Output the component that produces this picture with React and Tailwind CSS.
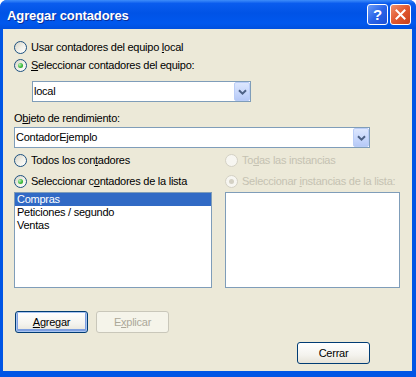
import React from 'react';

const FONT = "font-['Liberation_Sans',Arial,sans-serif]";

function Radio({ checked, disabled }) {
  return (
    <span
      className={`w-[13px] h-[13px] rounded-full border flex items-center justify-center shrink-0 ${
        disabled
          ? 'border-[#D4D1C4] bg-[#F7F6F1]'
          : 'border-[#1C5180] bg-[linear-gradient(135deg,#D6D3C6_0%,#F2F1EA_55%,#FFFFFF_100%)]'
      }`}
    >
      {checked && (
        <span
          className={`w-[5px] h-[5px] rounded-full ${
            disabled ? 'bg-[#D4D1C4]' : 'bg-[radial-gradient(circle_at_35%_35%,#B9F1B9_0%,#3DBA3D_55%,#1E931E_100%)]'
          }`}
        />
      )}
    </span>
  );
}

function RadioRow({ checked, disabled, children, className = '' }) {
  return (
    <div className={`h-[13px] flex items-center gap-[4px] ${className}`}>
      <Radio checked={checked} disabled={disabled} />
      <span className={`leading-[13px] whitespace-nowrap ${disabled ? 'text-[#C5C2B2]' : 'text-black'}`}>{children}</span>
    </div>
  );
}

function Combo({ value, className = '' }) {
  return (
    <div className={`h-[21px] border border-[#7F9DB9] bg-white flex items-stretch ${className}`}>
      <span className="flex-1 pl-[1px] flex items-center leading-[13px]">{value}</span>
      <span className="w-[16px] rounded-[2px] border border-[#BACDF7] bg-[linear-gradient(180deg,#DDE7FE_0%,#C6D6FB_60%,#B6C9F6_100%)] flex items-center justify-center">
        <svg width="9" height="6" viewBox="0 0 9 6">
          <path d="M1 1.2 L4.5 4.6 L8 1.2" fill="none" stroke="#4D6185" strokeWidth="2" />
        </svg>
      </span>
    </div>
  );
}

function Button({ children, primary, disabled, className = '' }) {
  let look = 'border-[#003C74] text-black bg-[linear-gradient(180deg,#FFFFFF_0%,#F4F3EE_60%,#E6E3D8_100%)]';
  if (primary) look += ' shadow-[inset_0_0_0_1px_#A9C4F0,inset_0_-1px_0_2px_#7E9FE0]';
  if (disabled) look = 'border-[#C9C7BA] text-[#ACA899] bg-[#F5F4EA]';
  return (
    <div className={`w-[73px] h-[22px] rounded-[3px] border flex items-center justify-center leading-[13px] ${look} ${className}`}>
      {children}
    </div>
  );
}

export default function App() {
  return (
    <div className={`w-[416px] h-[377px] bg-white ${FONT}`}>
      <div className="w-full h-full rounded-t-[7px] bg-[#0055E5] flex flex-col overflow-hidden">
        {/* Title bar */}
        <div className="h-[29px] shrink-0 flex items-center pl-[7px] pr-[5px] bg-[linear-gradient(180deg,#3E8DFA_0%,#0A5CEE_12%,#0053E6_45%,#0058EE_80%,#0050DE_100%)]">
          <span className="flex-1 text-white font-bold text-[13px] leading-[13px] pt-[2px] tracking-[-0.1px] [text-shadow:1px_1px_0_#0A2E9A]">
            Agregar contadores
          </span>
          <div className="flex gap-[2px]">
            <span className="w-[21px] h-[21px] rounded-[3px] border border-white bg-[linear-gradient(135deg,#6A9CF8_0%,#2A64E8_50%,#1C50D6_100%)] flex items-center justify-center text-white font-bold text-[15px] leading-none">
              ?
            </span>
            <span className="w-[21px] h-[21px] rounded-[3px] border border-white bg-[linear-gradient(135deg,#F0906C_0%,#E1582F_50%,#C8401C_100%)] flex items-center justify-center">
              <svg width="11" height="11" viewBox="0 0 11 11">
                <path d="M1.5 1.5 L9.5 9.5 M9.5 1.5 L1.5 9.5" stroke="#FFFFFF" strokeWidth="2" strokeLinecap="square" />
              </svg>
            </span>
          </div>
        </div>

        {/* Client area */}
        <div className="flex-1 ml-[3px] mr-[4px] mb-[6px] bg-[#ECE9D8] text-[11px] tracking-[-0.25px] text-black flex flex-col pt-[12px] pl-[11px]">
          <RadioRow>
            Usar contadores del equipo <u>l</u>ocal
          </RadioRow>
          <RadioRow checked className="mt-[5px]">
            <u>S</u>eleccionar contadores del equipo:
          </RadioRow>
          <Combo value="local" className="mt-[9px] ml-[18px] w-[219px]" />

          <div className="mt-[10px] h-[13px] leading-[13px]">
            O<u>b</u>jeto de rendimiento:
          </div>
          <Combo value="ContadorEjemplo" className="mt-[2px] w-[356px]" />

          <div className="grid grid-cols-[198px_175px] gap-x-[13px] mt-[6px]">
            <RadioRow>
              Todos los con<u>t</u>adores
            </RadioRow>
            <RadioRow disabled>
              To<u>d</u>as las instancias
            </RadioRow>
            <RadioRow checked className="mt-[8px]">
              Seleccionar c<u>o</u>ntadores de la lista
            </RadioRow>
            <RadioRow checked disabled className="mt-[8px]">
              Seleccionar <u>i</u>nstancias de la lista:
            </RadioRow>

            <div className="mt-[4px] h-[96px] border border-[#7F9DB9] bg-white flex flex-col">
              <div className="h-[13px] leading-[13px] pl-[2px] bg-[#316AC5] text-white">Compras</div>
              <div className="h-[13px] leading-[13px] pl-[2px]">Peticiones / segundo</div>
              <div className="h-[13px] leading-[13px] pl-[2px]">Ventas</div>
            </div>
            <div className="mt-[4px] h-[96px] border border-[#7F9DB9] bg-white" />
          </div>

          <div className="flex gap-[8px] mt-[23px] pl-[1px]">
            <Button primary>
              <span><u>A</u>gregar</span>
            </Button>
            <Button disabled>
              <span>E<u>x</u>plicar</span>
            </Button>
          </div>

          <div className="flex justify-end mt-[9px] pr-[42px]">
            <Button>Cerrar</Button>
          </div>
        </div>
      </div>
    </div>
  );
}
